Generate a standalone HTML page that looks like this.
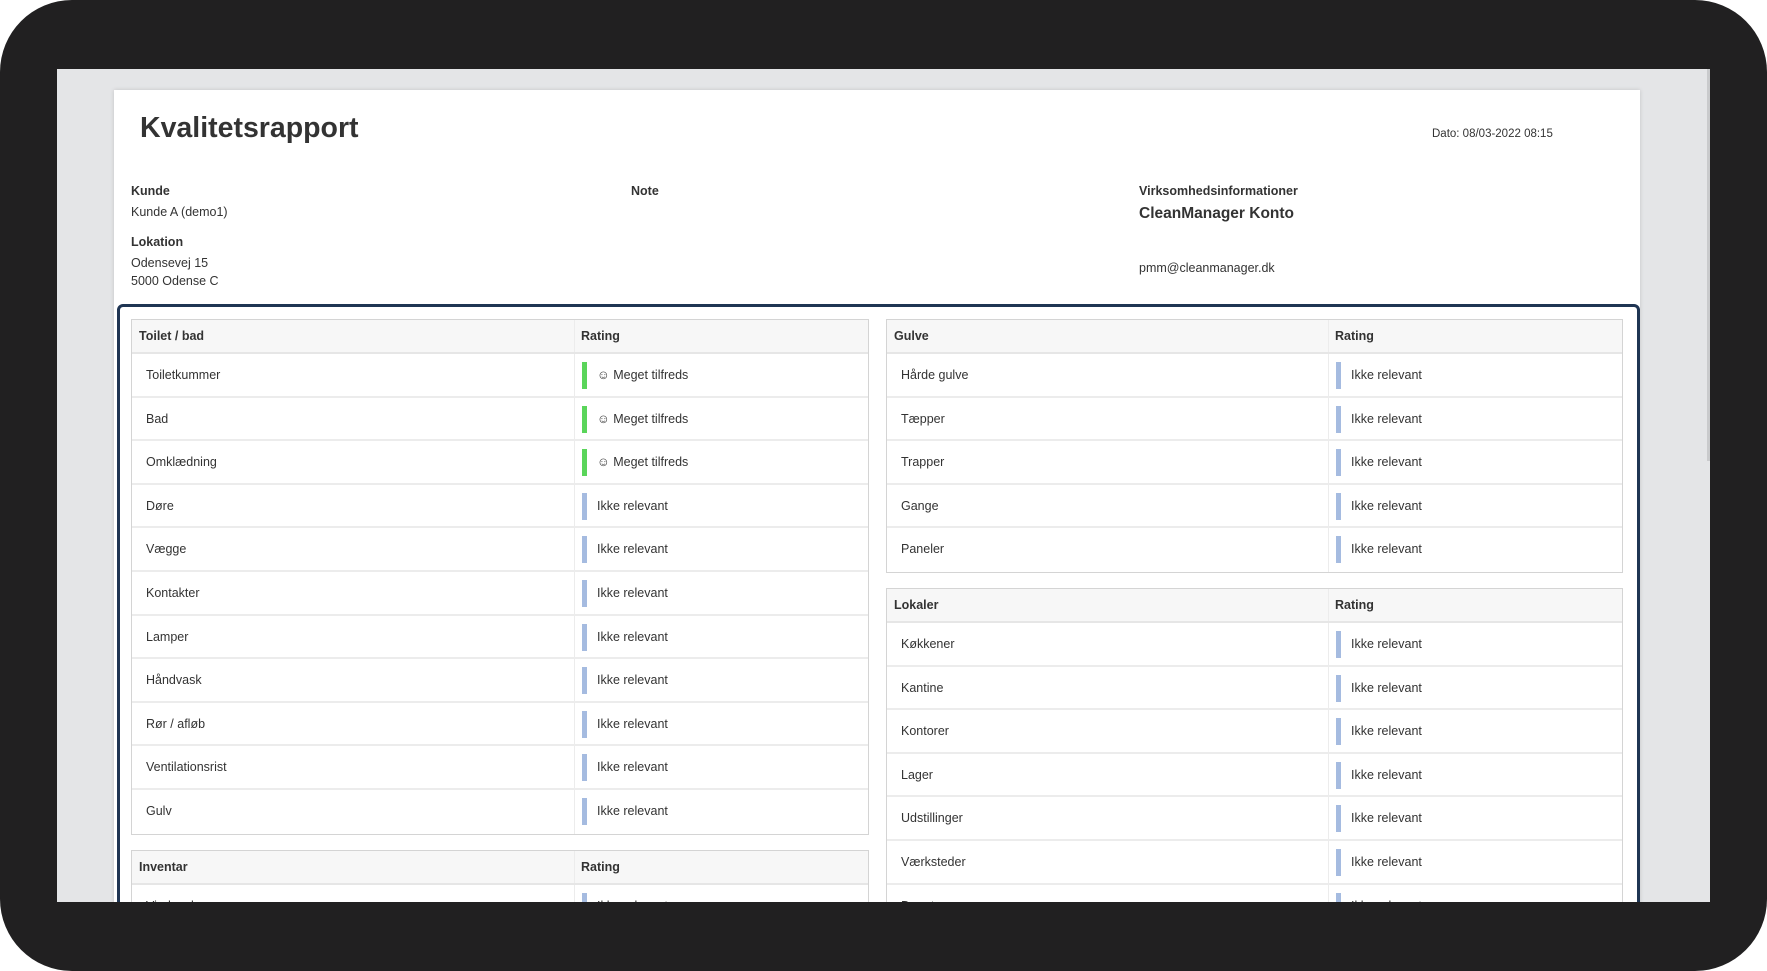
<!DOCTYPE html>
<html><head><meta charset="utf-8"><style>
*{box-sizing:border-box;margin:0;padding:0}
body{width:1767px;height:971px;background:#fff;overflow:hidden;font-family:"Liberation Sans",Arial,sans-serif;color:#333}
.bezel{position:absolute;left:0;top:0;width:1767px;height:971px;background:#212021;border-radius:72px}
.screen{position:absolute;left:57px;top:69px;width:1653px;height:833px;background:#e4e5e7;overflow:hidden}
.scroll{position:absolute;right:0;top:0;width:3px;height:392px;background:#c9cacc}
.page{position:absolute;left:57px;top:21px;width:1526px;height:900px;background:#fff;box-shadow:0 0 4px rgba(0,0,0,.15)}
.a{position:absolute;white-space:nowrap}
h1{position:absolute;left:26px;top:22px;font-size:28.5px;font-weight:bold;color:#333}
.lbl{font-size:12.5px;font-weight:bold;color:#333}
.txt{font-size:12.5px;color:#333}
.box{position:absolute;left:3px;top:214px;width:1523px;height:700px;border:3px solid #1f3553;border-radius:6px}
.tbl{position:absolute;border:1px solid #d4d4d4;background:#fff}
.hd{height:34px;background:#f7f7f7;border-bottom:2px solid #e6e6e6;display:flex;font-size:12.5px;font-weight:bold;line-height:33px}
.hd div:first-child,.r div:first-child{border-right:1px solid #ececec}
.r{height:43.6px;border-bottom:2px solid #ececec;display:flex;font-size:12.5px;line-height:42px}
.r .c1{padding-left:14px}
.hd .c1{padding-left:7px}
.hd .c2{padding-left:6px}
.r .c2{position:relative;padding-left:22px}
.bar{position:absolute;left:7px;top:8px;width:5px;height:27px;background:#a5bbe0}
.g{background:#5ad55a}
</style></head><body>
<div class="bezel"></div>
<div class="screen">
<div class="scroll"></div>
<div class="page">
<h1>Kvalitetsrapport</h1>
<div class="a txt" style="left:1318px;top:38px;font-size:11.5px">Dato: 08/03-2022 08:15</div>
<div class="a lbl" style="left:17px;top:94px">Kunde</div>
<div class="a txt" style="left:17px;top:115px">Kunde A (demo1)</div>
<div class="a lbl" style="left:17px;top:145px">Lokation</div>
<div class="a txt" style="left:17px;top:166px">Odensevej 15</div>
<div class="a txt" style="left:17px;top:184px">5000 Odense C</div>
<div class="a lbl" style="left:517px;top:94px">Note</div>
<div class="a lbl" style="left:1025px;top:94px">Virksomhedsinformationer</div>
<div class="a" style="left:1025px;top:115px;font-size:15.5px;font-weight:bold">CleanManager Konto</div>
<div class="a txt" style="left:1025px;top:171px">pmm@cleanmanager.dk</div>
<div class="box"></div>

<div class="tbl" style="left:17px;top:229px;width:738px">
<div class="hd"><div class="c1" style="width:443px">Toilet / bad</div><div class="c2">Rating</div></div>
<div class="r"><div class="c1" style="width:443px">Toiletkummer</div><div class="c2"><span class="bar g"></span>☺ Meget tilfreds</div></div>
<div class="r"><div class="c1" style="width:443px">Bad</div><div class="c2"><span class="bar g"></span>☺ Meget tilfreds</div></div>
<div class="r"><div class="c1" style="width:443px">Omklædning</div><div class="c2"><span class="bar g"></span>☺ Meget tilfreds</div></div>
<div class="r"><div class="c1" style="width:443px">Døre</div><div class="c2"><span class="bar"></span>Ikke relevant</div></div>
<div class="r"><div class="c1" style="width:443px">Vægge</div><div class="c2"><span class="bar"></span>Ikke relevant</div></div>
<div class="r"><div class="c1" style="width:443px">Kontakter</div><div class="c2"><span class="bar"></span>Ikke relevant</div></div>
<div class="r"><div class="c1" style="width:443px">Lamper</div><div class="c2"><span class="bar"></span>Ikke relevant</div></div>
<div class="r"><div class="c1" style="width:443px">Håndvask</div><div class="c2"><span class="bar"></span>Ikke relevant</div></div>
<div class="r"><div class="c1" style="width:443px">Rør / afløb</div><div class="c2"><span class="bar"></span>Ikke relevant</div></div>
<div class="r"><div class="c1" style="width:443px">Ventilationsrist</div><div class="c2"><span class="bar"></span>Ikke relevant</div></div>
<div class="r" style="border-bottom:0"><div class="c1" style="width:443px">Gulv</div><div class="c2"><span class="bar"></span>Ikke relevant</div></div>
</div>

<div class="tbl" style="left:17px;top:760px;width:738px">
<div class="hd"><div class="c1" style="width:443px">Inventar</div><div class="c2">Rating</div></div>
<div class="r"><div class="c1" style="width:443px">Vinduesk</div><div class="c2"><span class="bar"></span>Ikke relevant</div></div>
</div>

<div class="tbl" style="left:772px;top:229px;width:737px">
<div class="hd"><div class="c1" style="width:442px">Gulve</div><div class="c2">Rating</div></div>
<div class="r"><div class="c1" style="width:442px">Hårde gulve</div><div class="c2"><span class="bar"></span>Ikke relevant</div></div>
<div class="r"><div class="c1" style="width:442px">Tæpper</div><div class="c2"><span class="bar"></span>Ikke relevant</div></div>
<div class="r"><div class="c1" style="width:442px">Trapper</div><div class="c2"><span class="bar"></span>Ikke relevant</div></div>
<div class="r"><div class="c1" style="width:442px">Gange</div><div class="c2"><span class="bar"></span>Ikke relevant</div></div>
<div class="r" style="border-bottom:0"><div class="c1" style="width:442px">Paneler</div><div class="c2"><span class="bar"></span>Ikke relevant</div></div>
</div>

<div class="tbl" style="left:772px;top:498px;width:737px">
<div class="hd"><div class="c1" style="width:442px">Lokaler</div><div class="c2">Rating</div></div>
<div class="r"><div class="c1" style="width:442px">Køkkener</div><div class="c2"><span class="bar"></span>Ikke relevant</div></div>
<div class="r"><div class="c1" style="width:442px">Kantine</div><div class="c2"><span class="bar"></span>Ikke relevant</div></div>
<div class="r"><div class="c1" style="width:442px">Kontorer</div><div class="c2"><span class="bar"></span>Ikke relevant</div></div>
<div class="r"><div class="c1" style="width:442px">Lager</div><div class="c2"><span class="bar"></span>Ikke relevant</div></div>
<div class="r"><div class="c1" style="width:442px">Udstillinger</div><div class="c2"><span class="bar"></span>Ikke relevant</div></div>
<div class="r"><div class="c1" style="width:442px">Værksteder</div><div class="c2"><span class="bar"></span>Ikke relevant</div></div>
<div class="r"><div class="c1" style="width:442px">Depoter</div><div class="c2"><span class="bar"></span>Ikke relevant</div></div>
</div>
</div>
</div>
</body></html>
